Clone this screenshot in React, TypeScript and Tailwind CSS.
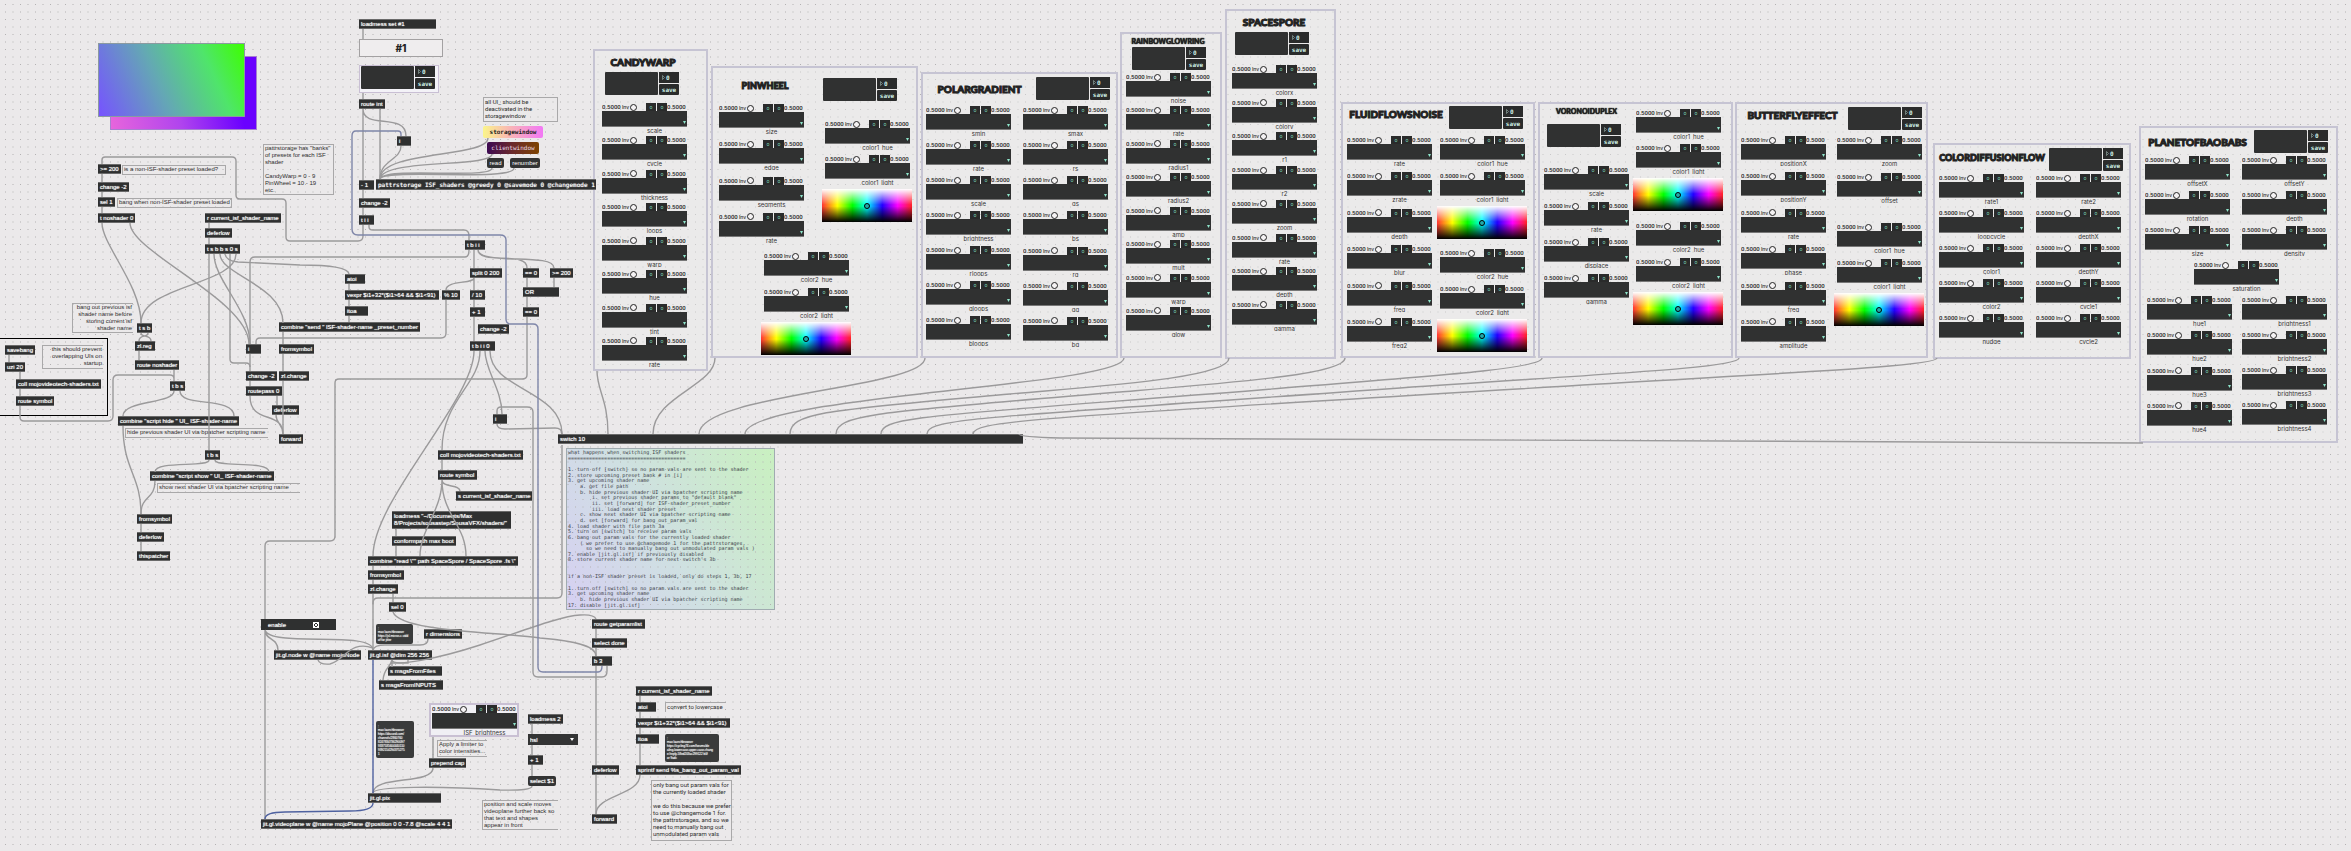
import type { ReactNode } from "react";

type Point = { x: number; y: number };
type Frame = Point & { w?: number; h?: number };
type ObjectSpec = [x: number, y: number, width: number, text: string];

const objects: ObjectSpec[] = [
  [98, 164, 23, ">= 200"],
  [98, 182, 31, "change -2"],
  [98, 197, 17, "sel 1"],
  [98, 213, 37, "t noshader 0"],
  [205, 213, 76, "r current_isf_shader_name"],
  [205, 228, 27, "deferlow"],
  [205, 244, 35, "t s b b s 0 s"],
  [137, 323, 15, "t s b"],
  [135, 341, 20, "zl.reg"],
  [135, 360, 44, "route noshader"],
  [170, 381, 15, "t b s"],
  [118, 416, 121, 'combine "script hide " UI_ ISF-shader-name'],
  [205, 450, 15, "t b s"],
  [150, 471, 124, 'combine "script show " UI_ ISF-shader-name'],
  [137, 514, 35, "fromsymbol"],
  [137, 532, 27, "deferlow"],
  [137, 551, 33, "thispatcher"],
  [5, 345, 30, "savebang"],
  [5, 362, 20, "uzi 20"],
  [16, 379, 85, "coll mojovideotech-shaders.txt"],
  [16, 396, 38, "route symbol"],
  [279, 322, 141, 'combine "send " ISF-shader-name _preset_number'],
  [246, 344, 15, "i"],
  [279, 344, 35, "fromsymbol"],
  [246, 371, 31, "change -2"],
  [279, 371, 30, "zl.change"],
  [246, 386, 36, "routepass 0"],
  [272, 405, 27, "deferlow"],
  [279, 434, 24, "forward"],
  [359, 19, 77, "loadmess set #1"],
  [359, 99, 26, "route int"],
  [397, 136, 14, "i"],
  [359, 180, 15, "- 1"],
  [359, 198, 31, "change -2"],
  [359, 215, 15, "t i i"],
  [465, 240, 20, "t b i i"],
  [470, 268, 32, "split 0 200"],
  [523, 268, 16, "== 0"],
  [550, 268, 23, ">= 200"],
  [345, 274, 20, "atoi"],
  [345, 290, 94, "vexpr $i1+32*($i1>64 && $i1<91)"],
  [442, 290, 18, "% 10"],
  [470, 290, 15, "/ 10"],
  [523, 287, 36, "OR"],
  [345, 306, 23, "itoa"],
  [470, 307, 15, "+ 1"],
  [523, 307, 16, "== 0"],
  [478, 324, 31, "change -2"],
  [470, 341, 25, "t b i i 0"],
  [493, 414, 14, "i"],
  [438, 450, 85, "coll mojovideotech-shaders.txt"],
  [438, 470, 39, "route symbol"],
  [456, 491, 76, "s current_isf_shader_name"],
  [392, 536, 64, "conformpath max boot"],
  [368, 556, 150, 'combine "read \\"" path SpaceSpore / SpaceSpore .fs \\"'],
  [368, 570, 36, "fromsymbol"],
  [368, 584, 30, "zl.change"],
  [389, 602, 17, "sel 0"],
  [424, 629, 38, "r dimensions"],
  [592, 619, 53, "route getparamlist"],
  [592, 638, 35, "select done"],
  [592, 656, 20, "b 3"],
  [274, 650, 87, "jit.gl.node w @name mojoNode"],
  [368, 650, 64, "jit.gl.isf @dim 256 256"],
  [388, 666, 54, "s msgsFromFiles"],
  [379, 680, 64, "s msgsFromINPUTS"],
  [429, 758, 37, "prepend cap"],
  [528, 714, 35, "loadmess 2"],
  [528, 755, 15, "+ 1"],
  [368, 793, 73, "jit.gl.pix"],
  [261, 819, 191, "jit.gl.videoplane w @name mojoPlane @position 0 0 -7.8 @scale 4 4 1"],
  [636, 686, 76, "r current_isf_shader_name"],
  [636, 702, 20, "atoi"],
  [636, 718, 94, "vexpr $i1+32*($i1>64 && $i1<91)"],
  [636, 734, 23, "itoa"],
  [636, 765, 105, "sprintf send %s_bang_out_param_val"],
  [592, 765, 27, "deferlow"],
  [592, 814, 25, "forward"],
  [558, 434, 465, "switch 10"],
];

const greyCords = [
  "M102 164V160Q102 157 105 157H232Q236 157 236 161V195Q236 199 240 199H282Q286 199 286 203V237Q286 241 290 241H358Q363 241 363 236V225",
  "M102 174V182M102 192V197M102 207V213",
  "M102 223C102 245 141 285 141 323",
  "M130 223C130 252 249 300 249 344",
  "M209 223V228M209 238V244M209 254V450",
  "M214 254C214 280 250 310 250 344",
  "M220 254C220 275 283 285 283 323",
  "M225 254Q226 261 238 262L300 265Q348 265 349 274",
  "M230 254V359Q230 363 234 363H246Q250 363 250 367",
  "M236 254C236 285 141 285 141 323",
  "M250 344V262Q250 257 255 257H465Q469 257 469 250",
  "M141 333C141 338 151 334 151 341M148 333C148 338 139 334 139 341M139 351V360",
  "M20 406V417Q20 421 24 421H108Q113 421 113 416V380Q113 375 118 375H170Q174 375 174 379V381M174 370V381",
  "M174 391C174 404 123 400 123 416M180 391C180 408 234 396 234 416",
  "M123 426C123 470 141 475 141 514",
  "M209 460C209 468 155 460 155 472M215 460C215 468 269 460 269 472",
  "M155 481C155 500 141 495 141 514M141 524V532M141 542V551",
  "M9 355V362M20 372V379M20 389V396",
  "M250 354V371M250 381V386M250 396C250 425 283 410 283 434M277 396V405M276 415C276 424 283 424 283 434",
  "M283 332V344M283 354V371M283 381V434",
  "M256 344V342Q256 338 260 338H441Q446 338 446 333V300",
  "M349 284V290M349 300V306M349 316V322",
  "M369 225V227Q369 230 373 230H464Q469 230 469 236V240",
  "M497 414V411Q497 407 501 407H527Q533 407 533 412V672Q533 677 538 677H602Q607 677 607 671V666",
  "M485 351C485 370 502 390 502 414",
  "M474 351C474 400 373 500 373 556",
  "M480 351C480 385 442 400 442 450",
  "M490 351C490 390 562 390 562 434",
  "M497 424Q497 429 505 429L555 428Q562 428 562 434",
  "M474 250V268M478 250C480 266 527 250 527 268M478 250C480 266 554 252 554 268",
  "M527 278V287M554 278V287M527 297V307",
  "M527 317V375Q527 379 522 379H339Q335 379 335 383V536Q335 541 330 541H270Q265 541 265 546V619",
  "M474 278V290M474 278C474 284 446 280 446 290M474 300V307M474 317V341",
  "M363 29V39M363 93V99M363 109V180M363 109C363 130 406 112 406 136M380 109V179",
  "M401 146C401 160 380 160 380 179",
  "M488 138C488 158 380 150 380 179M492 154C492 168 382 158 380 179M492 168C492 180 382 166 380 179M514 168C514 182 382 168 380 179",
  "M363 190V198M363 208V215",
  "M562 445V593Q562 598 557 598H378Q373 598 373 603V650",
  "M442 460V470M442 480C442 488 460 484 460 491M442 480C442 510 420 530 420 556M442 480C442 515 466 525 466 556",
  "M396 529V536M396 546V556M373 566V570M373 580V584M373 594V604M393 594V602",
  "M393 612C400 632 500 632 540 638C590 642 596 650 596 656",
  "M392 660C392 668 440 658 480 645S560 616 580 615Q594 614 596 619",
  "M596 629V638M596 648V656M596 666V765M596 775V814",
  "M640 775C640 795 596 795 596 814M640 696V702M640 712V718M640 728V734M640 744V765",
  "M265 630V819M265 630C265 640 278 638 278 650M265 630C270 648 373 630 373 650",
  "M318 660Q320 665 330 664C345 660 350 640 373 648",
  "M428 639Q428 645 420 645H385Q374 645 373 650",
  "M392 660V667M392 660C390 668 384 668 383 680M408 660V663H392",
  "M433 737V758M433 768C433 785 373 775 373 793",
  "M532 724V734M532 745V755M532 765V776M532 786Q532 791 500 790C440 786 373 786 373 793",
  "M597 371C597 390 608 400 608 434",
  "M715 358C715 386 653 396 653 434",
  "M925 358C925 388 699 394 699 434",
  "M1124 358C1124 386 745 396 745 434",
  "M1229 358C1229 378 1100 386 1010 394C830 410 790 412 790 434",
  "M1345 358C1345 374 1240 382 1120 392C880 412 836 414 836 434",
  "M1542 358C1542 370 1400 378 1260 390C930 416 881 416 881 434",
  "M1739 358C1739 368 1600 374 1400 388C980 418 927 418 927 434",
  "M1937 358C1937 366 1800 372 1600 384C1040 418 973 420 973 434",
  "M2143 443L1060 438Q1019 437 1019 434",
];

const blueCords = [
  "M401 136V134Q401 131 398 131H356Q352 131 352 136V229Q352 235 358 235H500Q506 235 506 240V319Q506 324 511 324H533Q538 324 538 329V667Q538 672 543 672H598Q602 672 602 666",
];

const videoCords = ["M373 660V793", "M373 803Q373 811 350 811L285 812Q265 812 265 819"];

const notes = [
  "what happens when switching ISF shaders",
  "=======================================",
  "",
  "1. turn off [switch] so no param vals are sent to the shader",
  "2. store upcoming preset bank # in [i]",
  "3. get upcoming shader name",
  "    a. get file path",
  "    b. hide previous shader UI via bpatcher scripting name",
  '        i. set previous shader params to "default blank"',
  "        ii. set [forward] for ISF-shader_preset_number",
  "        iii. load next shader preset",
  "    c. show next shader UI via bpatcher scripting name",
  "    d. set [forward] for bang_out_param_val",
  "4. load shader with file path 3a",
  "5. turn on [switch] to receive param vals",
  "6. bang out param vals for the currently loaded shader",
  "    ( we prefer to use @changemode 1 for the pattrstorages,",
  "      so we need to manually bang out unmodulated param vals )",
  "7. enable [jit.gl.isf] if previously disabled",
  "8. store current shader name for next switch's 3b",
  "",
  "",
  "if a non-ISF shader preset is loaded, only do steps 1, 3b, 17",
  "",
  "1. turn off [switch] so no param vals are sent to the shader",
  "3. get upcoming shader name",
  "    b. hide previous shader UI via bpatcher scripting name",
  "17. disable [jit.gl.isf]",
];

/** A node of the patch, placed freely on the canvas. */
function Node({ x, y, w, h, className = "", children }: Frame & { className?: string; children?: ReactNode }) {
  return (
    <div className={`absolute ${className}`} style={{ left: x, top: y, width: w, height: h }}>
      {children}
    </div>
  );
}

function Grid() {
  return (
    <svg className="pointer-events-none absolute inset-0 h-full w-full" aria-hidden="true">
      <defs>
        <pattern id="dots" x="5" y="4" width="15" height="15" patternUnits="userSpaceOnUse">
          <g fill="#b3b1b2">
            <rect x="0" y="0" width="1" height="1" />
            <rect x="7.5" y="0" width="1" height="1" />
            <rect x="0" y="7.5" width="1" height="1" />
            <rect x="7.5" y="7.5" width="1" height="1" />
          </g>
        </pattern>
      </defs>
      <rect width="100%" height="100%" fill="url(#dots)" />
    </svg>
  );
}

function Cords() {
  return (
    <svg className="pointer-events-none absolute inset-0 h-full w-full" fill="none" strokeWidth="1.4" aria-hidden="true">
      <g stroke="#9b9a9b">
        {greyCords.map((d) => (
          <path key={d} d={d} />
        ))}
      </g>
      <g stroke="#7f86a9">
        {blueCords.map((d) => (
          <path key={d} d={d} />
        ))}
      </g>
      <g stroke="#4f62a0">
        {videoCords.map((d) => (
          <path key={d} d={d} />
        ))}
      </g>
    </svg>
  );
}

function ObjectBox({ spec: [x, y, w, text] }: { spec: ObjectSpec }) {
  return (
    <Node
      x={x}
      y={y}
      w={w}
      className="flex h-[10px] items-center border-y border-[#6a6a6a] bg-[#2f3030] pl-[2px] text-[6px] leading-[8px] whitespace-pre text-white [text-shadow:0_0_1px_#fff]"
    >
      {text}
    </Node>
  );
}

function Comment({ lines, className = "", ...at }: Frame & { lines: string[]; className?: string }) {
  return (
    <Node {...at} className={`border border-[#a9a8a9] px-px text-[6px] leading-[7px] whitespace-pre text-[#2f2f2f] ${className}`}>
      {lines.map((line, i) => (
        <p key={i} className="h-[7px]">
          {line}
        </p>
      ))}
    </Node>
  );
}

function Preset({ className = "" }: { className?: string }) {
  return (
    <div className={`flex shrink-0 gap-px ${className}`}>
      <div className="h-[23px] w-[53px] rounded-[1px] bg-[#303131]" />
      <div className="flex flex-col gap-px font-['DejaVu_Sans_Mono',monospace] text-[6px] leading-[10px] font-bold text-[#cdeee4]">
        <button type="button" className="flex h-[11px] w-[20px] items-center gap-px bg-[#2a2b2b] pl-[3px]">
          <svg className="h-[5px] w-[3px]" viewBox="0 0 3 5" fill="none" stroke="#8fa39d" strokeWidth="0.7" aria-hidden="true">
            <path d="M0.5 0.5L2.5 2.5L0.5 4.5Z" />
          </svg>
          0
        </button>
        <button type="button" className="h-[11px] w-[20px] rounded-[1px] bg-[#2a2b2b] text-center">
          save
        </button>
      </div>
    </div>
  );
}

function Param({ name }: { name: string }) {
  return (
    <div className="w-[85px] shrink-0 font-['Inter',sans-serif] text-[6px] leading-[8px] text-[#333]">
      <div className="flex h-[8px] items-center text-[#1f1f1f]">
        <input
          className="w-[20px] bg-transparent p-0 font-['Roboto',sans-serif] leading-[8px] font-medium"
          defaultValue="0.5000"
          aria-label={`${name} low`}
        />
        <label className="flex items-center text-[5px] font-medium">
          Inv
          <input type="checkbox" className="ml-px h-[7px] w-[7px] appearance-none rounded-full border border-[#222] bg-[#f4f2f3]" />
        </label>
        <div className="ml-auto flex gap-px text-[5px] leading-[8px] text-[#7fd8bd]">
          <button type="button" className="h-[8px] w-[10px] bg-[#2a2b2b]" aria-label={`${name} source`}>
            o
          </button>
          <button type="button" className="h-[8px] w-[10px] bg-[#2a2b2b]" aria-label={`${name} target`}>
            o
          </button>
        </div>
        <input
          className="w-[20px] bg-transparent p-0 font-['Roboto',sans-serif] leading-[8px] font-medium"
          defaultValue="0.5000"
          aria-label={`${name} high`}
        />
      </div>
      <div className="flex h-[16px] items-end justify-end border-b border-[#777] bg-[#303131] pr-px pb-[2px]">
        <svg className="h-[3px] w-[3px]" viewBox="0 0 3 3" fill="#8ee6cb" aria-hidden="true">
          <path d="M0 0H3L1.5 3Z" />
        </svg>
      </div>
      <div className="-mr-5 h-[6px] overflow-hidden text-center leading-[7px]">{name}</div>
    </div>
  );
}

function Params({ names, className }: { names: string; className: string }) {
  return (
    <div className={`flex shrink-0 flex-col justify-between ${className}`}>
      {names.split(" ").map((name) => (
        <Param key={name} name={name} />
      ))}
    </div>
  );
}

function Picker({ className = "" }: { className?: string }) {
  return (
    <div
      className={`flex h-[33px] w-[90px] shrink-0 items-center justify-center bg-[linear-gradient(to_bottom,#fff_0%,#fff0_48%,#0000_52%,#000_100%),linear-gradient(to_right,#f33_0%,#ff0_17%,#0f0_34%,#0ff_50%,#20f_67%,#f0f_84%,#f22_100%)] ${className}`}
    >
      <div className="h-[6px] w-[6px] rounded-full border border-black bg-[#2aa]" />
    </div>
  );
}

const titleSizes = {
  sm: "text-[7px] [text-shadow:0_0_1px_#222,0_0_1px_#222]",
  md: "text-[9px] [-webkit-text-stroke:1px_#222]",
  lg: "text-[10px] [-webkit-text-stroke:1px_#222]",
};

function Title({ children, size = "lg", className }: { children: string; size?: keyof typeof titleSizes; className: string }) {
  return (
    <h2 className={`flex shrink-0 justify-center font-['Lato',sans-serif] leading-[12px] font-black text-[#222] ${titleSizes[size]} ${className}`}>
      {children}
    </h2>
  );
}

function Panel({ children, ...frame }: Frame & { children: ReactNode }) {
  return (
    <Node {...frame} className="flex flex-col items-start border-2 border-[#c6c4d3] bg-[#ecebec]/40">
      {children}
    </Node>
  );
}

function ShaderPanels() {
  return (
    <>
      <Panel x={593} y={49} w={115} h={322}>
        <Title className="mt-[5px] w-[96px]">CANDYWARP</Title>
        <Preset className="mt-1 ml-[10px]" />
        <Params className="mt-2 ml-[7px] h-[264px]" names="scale cycle thickness loops warp hue tint rate" />
      </Panel>

      <Panel x={711} y={66} w={207} h={292}>
        <div className="flex">
          <div className="w-[109px]">
            <Title size="md" className="mt-3 w-[104px]">
              PINWHEEL
            </Title>
            <Params className="mt-3 ml-[6px] h-[139px]" names="size edge segments rate" />
          </div>
          <div className="pt-[10px]">
            <Preset className="ml-px" />
            <Params className="mt-[19px] ml-[3px] h-[65px]" names="color1_hue color1_light" />
            <Picker className="mt-1" />
          </div>
        </div>
        <Params className="mt-[9px] ml-[51px] h-[66px]" names="color2_hue color2_light" />
        <Picker className="mt-1 ml-12" />
      </Panel>

      <Panel x={921} y={72} w={197} h={286}>
        <div className="flex pt-[3px]">
          <Title className="mt-[6px] w-[113px]">POLARGRADIENT</Title>
          <Preset />
        </div>
        <div className="mt-[6px] ml-[3px] flex items-start gap-3">
          <Params className="h-[240px]" names="smin rate scale brightness rloops gloops bloops" />
          <Params className="h-[241px]" names="smax rs gs bs rg gg bg" />
        </div>
      </Panel>

      <Panel x={1120} y={32} w={102} h={326}>
        <Title size="sm" className="mt-px w-[92px]">
          RAINBOWGLOWRING
        </Title>
        <Preset className="ml-[10px]" />
        <Params className="mt-[3px] ml-1 h-[264px]" names="noise rate radius1 radius2 amp mult warp glow" />
      </Panel>

      <Panel x={1225} y={9} w={111} h={350}>
        <Title className="mt-[5px] w-[94px]">SPACESPORE</Title>
        <Preset className="mt-1 ml-2" />
        <Params className="mt-[10px] ml-[5px] h-[266px]" names="colorx colory r1 r2 zoom rate depth gamma" />
      </Panel>

      <Panel x={1341} y={102} w={194} h={256}>
        <div className="flex pt-[2px]">
          <Title className="mt-[2px] w-[106px]">FLUIDFLOWSNOISE</Title>
          <Preset />
        </div>
        <div className="mt-[7px] ml-1 flex items-start gap-[5px]">
          <Params className="h-[212px]" names="rate zrate depth blur freq freq2" />
          <div>
            <Params className="ml-[3px] h-[66px]" names="color1_hue color1_light" />
            <Picker className="mt-1" />
            <Params className="mt-[10px] ml-[3px] h-[66px]" names="color2_hue color2_light" />
            <Picker className="mt-1" />
          </div>
        </div>
      </Panel>

      <Panel x={1538} y={102} w={195} h={256}>
        <div className="flex">
          <div className="w-[93px]">
            <Title size="sm" className="mt-px">
              VORONOIDUPLEX
            </Title>
            <Preset className="mt-[7px] ml-[7px]" />
            <Params className="mt-[19px] ml-1 h-[138px]" names="scale rate displace gamma" />
          </div>
          <div className="pt-[5px]">
            <Params className="ml-[3px] h-[65px]" names="color1_hue color1_light" />
            <Picker className="mt-1" />
            <Params className="mt-[11px] ml-[3px] h-[66px]" names="color2_hue color2_light" />
            <Picker className="mt-1" />
          </div>
        </div>
      </Panel>

      <Panel x={1735} y={102} w={193} h={256}>
        <div className="flex pt-[3px]">
          <Title className="mt-[2px] w-[111px]">BUTTERFLYEFFECT</Title>
          <Preset />
        </div>
        <div className="mt-[6px] ml-1 flex items-start gap-2">
          <Params className="h-[212px]" names="positionX positionY rate phase freq amplitude" />
          <div>
            <Params className="ml-[3px] h-[67px]" names="zoom offset" />
            <Params className="mt-5 ml-[3px] h-[66px]" names="color1_hue color1_light" />
            <Picker className="mt-1" />
          </div>
        </div>
      </Panel>

      <Panel x={1933} y={143} w={198} h={216}>
        <div className="flex pt-[3px]">
          <Title size="md" className="mt-1 w-[114px]">
            COLORDIFFUSIONFLOW
          </Title>
          <Preset />
        </div>
        <div className="mt-[3px] ml-1 flex gap-3">
          <Params className="h-[170px]" names="rate1 loopcycle color1 color2 nudge" />
          <Params className="h-[170px]" names="rate2 depthX depthY cycle1 cycle2" />
        </div>
      </Panel>

      <Panel x={2139} y={126} w={199} h={317}>
        <div className="flex pt-[2px]">
          <Title className="mt-[6px] w-[113px]">PLANETOFBAOBABS</Title>
          <Preset />
        </div>
        <div className="mt-[3px] ml-1 flex gap-3">
          <Params className="h-[100px]" names="offsetX rotation size" />
          <Params className="h-[100px]" names="offsetY depth density" />
        </div>
        <Params className="mt-[5px] ml-[53px] h-[30px]" names="saturation" />
        <div className="mt-[5px] ml-[6px] flex gap-[10px]">
          <Params className="h-[136px]" names="hue1 hue2 hue3 hue4" />
          <Params className="h-[135px]" names="brightness1 brightness2 brightness3 brightness4" />
        </div>
      </Panel>
    </>
  );
}

function LinkMessage({ lines, ...at }: Frame & { lines: string[] }) {
  return (
    <Node {...at}>
      <button
        type="button"
        className="flex h-full w-full flex-col justify-center rounded-[2px] bg-[#3a3b3b] px-[2px] text-left text-[3px] leading-[4px] whitespace-pre text-white [text-shadow:0_0_1px_#fff]"
      >
        {lines.map((line) => (
          <span key={line}>{line}</span>
        ))}
      </button>
    </Node>
  );
}

export default function App() {
  return (
    <main className="relative min-h-screen w-full overflow-hidden bg-[#ebe9ea] font-['Liberation_Sans',Arial,sans-serif]">
      <Node x={566} y={448} w={209} h={162} className="border border-[#a0abb0] bg-[linear-gradient(60deg,#d6d0f2_0%,#cfe0e2_45%,#c9f0c0_100%)]" />
      <Grid />
      <Node x={110} y={56} w={147} h={74} className="border border-[#a77fd0] bg-[linear-gradient(80deg,#e765dc_0%,#b044ee_45%,#6a00ff_85%)]" />
      <Node x={98} y={43} w={147} h={74} className="border border-[#8b9aa0] bg-[linear-gradient(65deg,#7653ff_0%,#64a8b4_42%,#4fe56a_75%,#3dff00_100%)]" />

      <Node x={-2} y={338} w={110} h={78} className="border border-black" />

      <ShaderPanels />

      <Comment x={122} y={165} w={104} h={10} lines={["is a non-ISF-shader preset loaded?"]} />
      <Comment x={117} y={198} w={115} h={10} lines={["bang when non-ISF-shader preset loaded"]} />
      <Comment
        x={263}
        y={144}
        w={71}
        h={51}
        lines={['pattrstorage has "banks"', "of presets for each ISF", "shader", "", "CandyWarp = 0 - 9", "PinWheel = 10 - 19", "etc."]}
      />
      <Comment
        x={72}
        y={303}
        w={61}
        h={30}
        className="border-r-0 text-right"
        lines={["bang out previous isf", "shader name before", "storing current isf", "shader name"]}
      />
      <Comment x={42} y={345} w={61} h={24} className="border-r-0 text-right" lines={["this should prevent", "overlapping UIs on", "startup"]} />
      <Comment x={125} y={428} w={143} h={10} className="border-r-0" lines={["hide previous shader UI via bpatcher scripting name"]} />
      <Comment x={157} y={483} w={143} h={10} className="border-r-0" lines={["show next shader UI via bpatcher scripting name"]} />
      <Comment
        x={483}
        y={97}
        w={75}
        h={25}
        className="font-['Roboto',sans-serif]"
        lines={["all UI_ should be", "deactivated in the", "storagewindow"]}
      />
      <Comment x={437} y={740} w={50} h={17} className="border-r-0" lines={["Apply a limiter to", "color intensities..."]} />
      <Comment
        x={482}
        y={800}
        w={76}
        h={30}
        className="border-r-0"
        lines={["position and scale moves", "videoplane further back so", "that text and shapes", "appear in front"]}
      />
      <Comment x={665} y={702} w={61} h={10} className="border-r-0 border-b-0 font-['Roboto',sans-serif]" lines={["convert to lowercase"]} />
      <Comment
        x={651}
        y={780}
        w={81}
        h={61}
        className="font-['Roboto',sans-serif]"
        lines={[
          "only bang out param vals for",
          "the currently loaded shader",
          "",
          "we do this because we prefer",
          "to use @changemode 1 for",
          "the pattrstorages, and so we",
          "need to manually bang out",
          "unmodulated param vals",
        ]}
      />

      <Node
        x={567}
        y={449}
        w={207}
        h={160}
        className="flex flex-col justify-between px-px py-px font-['DejaVu_Sans_Mono',monospace] text-[5px] leading-[5px] whitespace-pre text-[#3a4048]"
      >
        {notes.map((line, i) => (
          <p key={i} className="h-[5px]">
            {line}
          </p>
        ))}
      </Node>

      {objects.map((spec) => (
        <ObjectBox key={`${spec[0]}-${spec[1]}`} spec={spec} />
      ))}

      <Node x={359} y={39} w={84} h={18} className="flex items-center justify-center border border-[#a3a1a2] bg-[#efedee]">
        <span className="font-['Inter',sans-serif] text-[10px] leading-[12px] font-extrabold text-[#222]">#1</span>
      </Node>
      <Node x={359} y={65} w={80} h={28} className="border border-[#c9bfd4] bg-[#f3f2f7] pl-px">
        <Preset />
      </Node>
      <Node
        x={376}
        y={179}
        w={220}
        h={11}
        className="flex items-center border-y border-[#6a6a6a] bg-[#2f3030] pl-[2px] font-['DejaVu_Sans_Mono',monospace] text-[6px] leading-[8px] whitespace-pre text-white [text-shadow:0_0_1px_#fff]"
      >
        pattrstorage ISF_shaders @greedy 0 @savemode 0 @changemode 1
      </Node>
      <Node x={483} y={126} className="flex flex-col items-start gap-1 text-[6px] leading-[8px]">
        <button
          type="button"
          className="h-[12px] w-[60px] rounded-[2px] bg-[linear-gradient(to_right,#fbf58a,#f9b5b5_45%,#f277f5)] font-['DejaVu_Sans_Mono',monospace] font-bold text-[#222]"
        >
          storagewindow
        </button>
        <button
          type="button"
          className="ml-1 h-[12px] w-[52px] rounded-[2px] bg-[linear-gradient(to_right,#3d0a52,#6b2a2a_50%,#7d4300)] font-['DejaVu_Sans_Mono',monospace] text-[#ead9e6]"
        >
          clientwindow
        </button>
        <div className="ml-1 flex gap-[6px] text-white [text-shadow:0_0_1px_#fff]">
          <button type="button" className="h-[10px] w-[17px] rounded-[2px] bg-[#333434]">
            read
          </button>
          <button type="button" className="h-[10px] w-[30px] rounded-[2px] bg-[#333434]">
            renumber
          </button>
        </div>
      </Node>

      <Node
        x={392}
        y={511}
        w={119}
        h={18}
        className="border-y border-[#6a6a6a] bg-[#2f3030] pt-px pl-[2px] text-[6px] leading-[7px] whitespace-pre text-white [text-shadow:0_0_1px_#fff]"
      >
        <p>loadmess "~/Documents/Max</p>
        <p>8/Projects/sousastep/SousaVFX/shaders/"</p>
      </Node>

      <Node x={261} y={619} w={75} h={11} className="bg-[#2f3030]">
        <label className="flex h-full items-center pl-[7px] text-[6px] leading-[8px] text-white [text-shadow:0_0_1px_#fff]">
          enable
          <input
            type="checkbox"
            defaultChecked
            className="ml-[27px] h-[6px] w-[6px] appearance-none border border-white bg-[#2f3030] checked:bg-[linear-gradient(45deg,#0000_40%,#fff_40%,#fff_60%,#0000_60%),linear-gradient(-45deg,#0000_40%,#fff_40%,#fff_60%,#0000_60%)]"
          />
        </label>
      </Node>
      <Node x={528} y={734} w={50} h={11} className="flex items-center bg-[#333434] pr-1">
        <select
          className="h-full min-w-0 flex-1 appearance-none bg-transparent pl-[2px] text-[6px] leading-[8px] text-white [text-shadow:0_0_1px_#fff]"
          aria-label="Color mode"
          defaultValue="hsl"
        >
          <option>hsl</option>
        </select>
        <svg className="pointer-events-none h-[3px] w-[4px]" viewBox="0 0 4 3" fill="#fff" aria-hidden="true">
          <path d="M0 0H4L2 3Z" />
        </svg>
      </Node>
      <Node x={528} y={776} w={28} h={10}>
        <button
          type="button"
          className="flex h-full w-full items-center rounded-[2px] bg-[#333434] pl-[2px] text-[6px] leading-[8px] text-white [text-shadow:0_0_1px_#fff]"
        >
          select $1
        </button>
      </Node>

      <Node x={429} y={703} w={90} h={34} className="border-2 border-[#c9c0d3] bg-[#f0eff4] px-px">
        <Param name="ISF_brightness" />
      </Node>

      <LinkMessage x={376} y={624} w={37} h={20} lines={[";", "max launchbrowser", "https://jsl.micros.c.vidd", "of for jitter"]} />
      <LinkMessage
        x={376}
        y={721}
        w={38}
        h={37}
        lines={[";", "max launchbrowser", "https://discord.com/", "channels/2860760", "8247834736290097", "9337535604440110", "9392154294375275", "1"]}
      />
      <LinkMessage
        x={665}
        y={734}
        w={54}
        h={28}
        lines={[";", "max launchbrowser", "https://cycling74.com/forums/de", "aling-lowercase-upper-case-chang", "e#reply-58ed203ac299122 b0f", "or 9adc"]}
      />

      <Cords />
    </main>
  );
}
